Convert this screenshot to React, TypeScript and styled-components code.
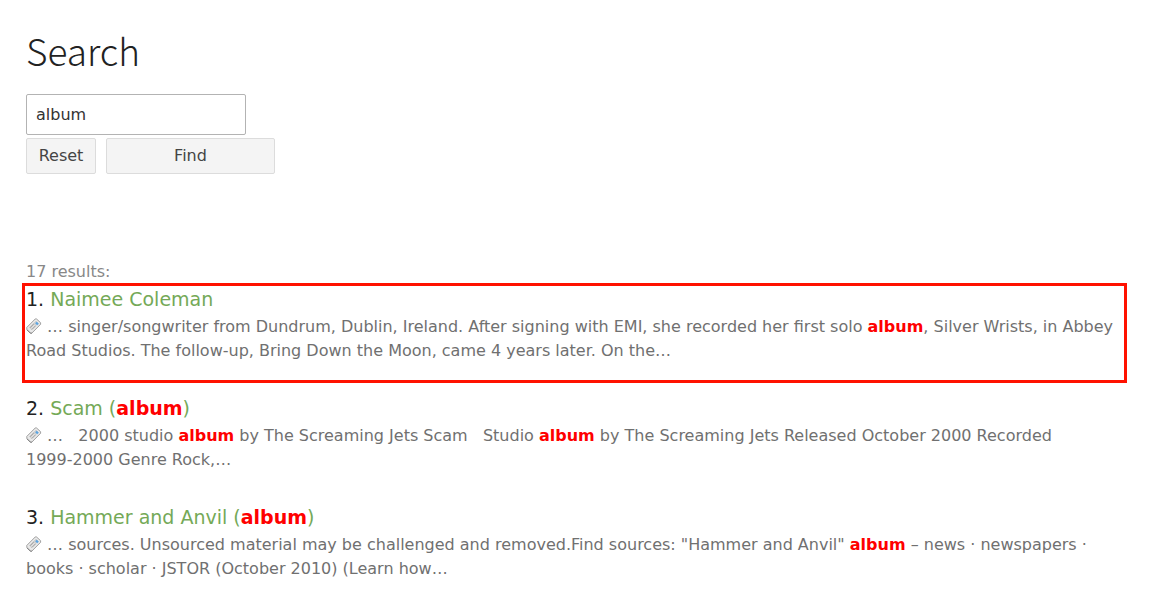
import React, { useState } from "react";
import styled, { createGlobalStyle } from "styled-components";

const GlobalStyle = createGlobalStyle`
  *, *::before, *::after { box-sizing: border-box; }
  body {
    margin: 0;
    background: #fff;
    color: #707070;
    font: 16px/24px "DejaVu Sans", sans-serif;
  }
`;

const Page = styled.main`
  padding: 22px 46px 16px 26px;
`;

const Heading = styled.h1`
  margin: 0 0 16px;
  color: #222;
  font-family: "Noto Sans CJK SC", "Open Sans", sans-serif;
  font-size: 37px;
  font-weight: 300;
  line-height: 56px;
`;

const SearchForm = styled.form`
  display: flex;
  flex-direction: column;
  gap: 3px;
  max-width: 249px;
`;

const SearchInput = styled.input`
  width: 220px;
  height: 41px;
  padding: 0 9px;
  border: 1px solid #b3b3b3;
  border-radius: 2px;
  background: #fff;
  color: #333;
  font: inherit;
  outline: none;
`;

const Buttons = styled.div`
  display: flex;
  gap: 10px;
`;

const Button = styled.button<{ $grow?: boolean }>`
  flex: ${(p) => (p.$grow ? "1" : "0 0 70px")};
  height: 36px;
  padding: 0 0 1px;
  border: 1px solid #dcdcdc;
  border-radius: 2px;
  background: #f4f4f4;
  color: #444;
  font: inherit;
`;

const Count = styled.p`
  margin: 87px 0 0;
  color: #888;
  line-height: 22px;
`;

const Results = styled.ol`
  display: flex;
  flex-direction: column;
  gap: 9px;
  margin: 0 -4px;
  padding: 0;
  list-style: none;
`;

const Result = styled.li<{ $marked?: boolean }>`
  padding: 0 1px 17px;
  border: 3px solid ${(p) => (p.$marked ? "#ff1100" : "transparent")};
`;

const Title = styled.h2`
  margin: 0 0 3px;
  color: #222;
  font-size: 19px;
  font-weight: 400;
  line-height: 26px;
`;

const TitleLink = styled.a`
  color: #74a957;
  text-decoration: none;
`;

const Excerpt = styled.p`
  margin: 0;
`;

const Match = styled.strong`
  color: #f00;
  font-weight: 700;
`;

const Unbroken = styled.span`
  white-space: nowrap;
`;

const Icon = styled.svg`
  width: 16px;
  height: 16px;
  vertical-align: -2px;
`;

const TagIcon = () => (
  <Icon viewBox="0 0 16 16" aria-hidden="true">
    <path d="M.8 9.4 9.2 1Q9.9.4 10.6 1L14.6 4.7V6.3L6 15Q5.1 15.7 4.3 15L.8 11.5Z" fill="#e6e6e6" stroke="#999" strokeWidth=".9" />
    <path d="m2.4 9.6 7.6-7.5 3.2 3.1-7.6 7.6Z" fill="#cfcfcf" stroke="#f4f4f4" strokeWidth=".7" />
    <path d="m4.2 9.6 3.6-3.6M6 11.4l3.6-3.6" fill="none" stroke="#999" strokeWidth=".9" />
    <path d="m5.1 10.5 3.6-3.6" fill="none" stroke="#eee" strokeWidth=".9" />
    <path d="m9.2 5.3 1.6-1.6 2 2-1.6 1.6Z" fill="#5ba5e2" />
    <path d="m1 11.9 3.4 3.2q.7.5 1.5-.1" fill="none" stroke="#777" strokeWidth=".9" />
  </Icon>
);

const items = [
  {
    title: "Naimee Coleman",
    excerpt:
      "… singer/songwriter from Dundrum, Dublin, Ireland. After signing with EMI, she recorded her first solo album, Silver Wrists, in Abbey Road Studios. The follow-up, Bring Down the Moon, came 4 years later. On the…",
  },
  {
    title: "Scam (album)",
    excerpt:
      "… \u00a0 2000 studio album by The Screaming Jets Scam \u00a0 Studio album by The Screaming Jets Released October 2000 Recorded 1999-2000 Genre Rock,…",
  },
  {
    title: "Hammer and Anvil (album)",
    excerpt:
      "… sources. Unsourced material may be challenged and removed.Find sources: \"Hammer and Anvil\" album – news · newspapers · books · scholar · JSTOR (October 2010) (Learn how…",
  },
];

// Marks each hit of the search word and keeps year ranges on one line.
const highlight = (text: string) =>
  text.split(/(album|\d{4}-\d{4})/).map((part, i) => {
    if (i % 2 === 0) return part;
    return part === "album" ? <Match key={i}>{part}</Match> : <Unbroken key={i}>{part}</Unbroken>;
  });

export default function App() {
  const [query, setQuery] = useState("album");
  return (
    <>
      <GlobalStyle />
      <Page>
        <Heading>Search</Heading>
        <SearchForm onSubmit={(e) => e.preventDefault()}>
          <SearchInput type="text" aria-label="Search" value={query} onChange={(e) => setQuery(e.target.value)} />
          <Buttons>
            <Button type="button" onClick={() => setQuery("")}>Reset</Button>
            <Button type="submit" $grow>Find</Button>
          </Buttons>
        </SearchForm>
        <Count>17 results:</Count>
        <Results>
          {items.map((item, i) => (
            <Result key={item.title} $marked={i === 0}>
              <Title>
                {`${i + 1}. `}
                <TitleLink href="#">{highlight(item.title)}</TitleLink>
              </Title>
              <Excerpt>
                <TagIcon /> {highlight(item.excerpt)}
              </Excerpt>
            </Result>
          ))}
        </Results>
      </Page>
    </>
  );
}
